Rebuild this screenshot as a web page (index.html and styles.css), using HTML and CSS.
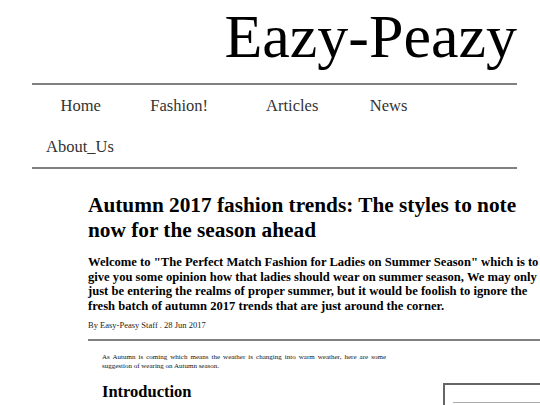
FILE: index.html
```html
<!DOCTYPE html>
<html lang="en">
<head>
<meta charset="utf-8">
<title>Eazy-Peazy</title>
<link rel="stylesheet" href="styles.css">
</head>
<body>
<header class="masthead">
  <h1 class="brand">Eazy-Peazy</h1>
  <nav class="mainnav">
    <ul class="nav-list">
      <li class="nav-item nav-home">Home</li>
      <li class="nav-item nav-fashion">Fashion!</li>
      <li class="nav-item nav-articles">Articles</li>
      <li class="nav-item nav-news">News</li>
      <li class="nav-item nav-about">About_Us</li>
    </ul>
  </nav>
</header>
<main class="article">
  <h2 class="article-title">Autumn 2017 fashion trends: The styles to note now for the season ahead</h2>
  <p class="lede">Welcome to "The Perfect Match Fashion for Ladies on Summer Season" which is to give you some opinion how that ladies should wear on summer season, We may only just be entering the realms of proper summer, but it would be foolish to ignore the fresh batch of autumn 2017 trends that are just around the corner.</p>
  <p class="byline">By Easy-Peasy Staff . 28 Jun 2017</p>
  <div class="article-body">
    <div class="body-main">
      <p class="intro-note">As Autumn is coming which means the weather is changing into warm weather, here are some suggestion of wearing on Autumn season.</p>
      <h3 class="section-title">Introduction</h3>
    </div>
    <aside class="sidebox">
      <div class="sidebox-rule"></div>
    </aside>
  </div>
</main>
</body>
</html>
```
FILE: styles.css
```css
html, body {
  margin: 0;
  padding: 0;
  background: #ffffff;
  overflow: hidden;
}
body {
  font-family: "Liberation Serif", "Times New Roman", serif;
  color: #000;
  width: 540px;
  height: 405px;
}
.masthead {
  margin: 0 23px 0 32px;
}
.brand {
  margin: 0;
  padding: 5px 0 16px 0;
  font-size: 62px;
  line-height: 62px;
  font-weight: normal;
  text-align: right;
  border-bottom: 2px solid #808080;
}
.mainnav {
  border-bottom: 2px solid #808080;
}
.nav-list {
  list-style: none;
  margin: 0;
  padding: 0;
  display: flex;
  flex-wrap: wrap;
}
.nav-item {
  font-size: 16.5px;
  line-height: 41px;
  color: #333;
}
.nav-home { margin-left: 28.5px; }
.nav-fashion { margin-left: 49.5px; }
.nav-articles { margin-left: 58px; }
.nav-news { margin-left: 51.5px; margin-right: 60px; }
.nav-about { margin-left: 14px; }

.article {
  margin-left: 88px;
  width: 455px;
}
.article-title {
  margin: 24px 0 0;
  font-size: 21.3px;
  line-height: 24.5px;
  font-weight: bold;
}
.lede {
  margin: 13px 0 0;
  font-size: 12.6px;
  line-height: 14.5px;
  font-weight: bold;
}
.byline {
  margin: 7px 0 0;
  font-size: 8.5px;
  line-height: 10px;
  color: #222;
}
.article-body {
  margin-top: 9px;
  width: 560px;
  border-top: 2px solid #808080;
  display: flex;
  align-items: flex-start;
}
.body-main {
  width: 284px;
  padding-left: 14px;
}
.intro-note {
  margin: 12px 0 0;
  font-size: 7px;
  line-height: 8.5px;
  text-align: justify;
  color: #111;
}
.section-title {
  margin: 12px 0 0;
  font-size: 16.5px;
  line-height: 19px;
  font-weight: bold;
}
.sidebox {
  margin: 42px 0 0 57px;
  width: 120px;
  height: 40px;
  border-top: 2px solid #666;
  border-left: 2px solid #666;
}
.sidebox-rule {
  margin: 17px 0 0 8px;
  border-top: 1px solid #aaa;
}
```
